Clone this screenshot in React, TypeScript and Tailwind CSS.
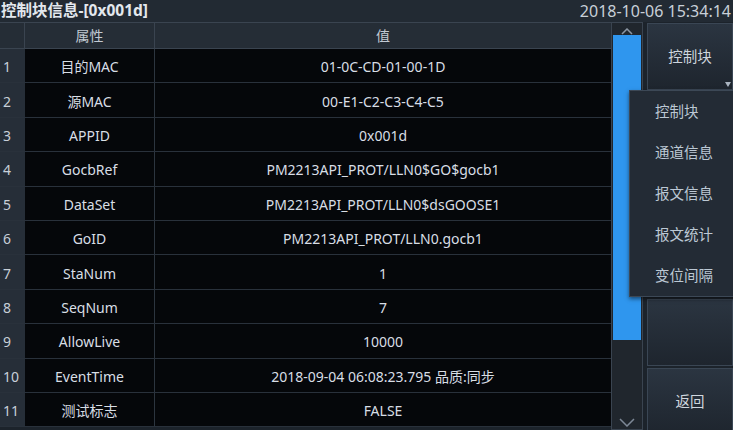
const rows: [string, string][] = [
  ['目的MAC', '01-0C-CD-01-00-1D'],
  ['源MAC', '00-E1-C2-C3-C4-C5'],
  ['APPID', '0x001d'],
  ['GocbRef', 'PM2213API_PROT/LLN0$GO$gocb1'],
  ['DataSet', 'PM2213API_PROT/LLN0$dsGOOSE1'],
  ['GoID', 'PM2213API_PROT/LLN0.gocb1'],
  ['StaNum', '1'],
  ['SeqNum', '7'],
  ['AllowLive', '10000'],
  ['EventTime', '2018-09-04 06:08:23.795 品质:同步'],
  ['测试标志', 'FALSE'],
];

const menu = ['控制块', '通道信息', '报文信息', '报文统计', '变位间隔'];

function SideButton({ label, arrow }: { label?: string; arrow?: boolean }) {
  return (
    <div className="relative flex h-[67px] shrink-0 items-center justify-center border border-[#3a4654] bg-gradient-to-b from-[#2b3541] to-[#1e252e] text-[14.5px] text-[#cfd6de]">
      {label}
      {arrow && (
        <span className="absolute right-[1px] bottom-[2px] h-0 w-0 border-t-[5px] border-r-[3px] border-l-[3px] border-t-[#aab4c0] border-r-transparent border-l-transparent" />
      )}
    </div>
  );
}

export default function App() {
  return (
    <div
      className="relative flex h-[430px] w-[733px] flex-col overflow-hidden bg-[#1c232b]"
      style={{ fontFamily: '"Noto Sans", "Noto Sans CJK SC", sans-serif' }}
    >
      <div className="flex h-[22px] shrink-0 items-center justify-between bg-[#222a33] pr-[2px] pl-[1px]">
        <span className="text-[15.5px] font-bold text-[#e3e8ee]">控制块信息-[0x001d]</span>
        <span className="text-[16px] text-[#c8d0d8]">2018-10-06 15:34:14</span>
      </div>

      <div className="flex min-h-0 flex-1">
        <div className="flex w-[611px] shrink-0 flex-col border-t border-[#3a4450] text-[14px] text-[#d8dee5]">
          <div className="flex h-[26px] shrink-0 border-b border-[#3a4450] bg-[#252d36] text-[#c2cad3]">
            <div className="w-[25px] shrink-0 border-r border-[#3a4450]" />
            <div className="flex w-[130px] shrink-0 items-center justify-center border-r border-[#3a4450]">属性</div>
            <div className="flex flex-1 items-center justify-center">值</div>
          </div>
          {rows.map(([k, v], i) => (
            <div key={i} className="flex h-[34.4px] shrink-0 border-b border-[#29313b]">
              <div className="flex w-[25px] shrink-0 items-center bg-[#262e38] pl-[3px] pt-[2px] text-[#c8d0d8]">{i + 1}</div>
              <div className="flex w-[130px] shrink-0 items-center justify-center border-r border-[#2c353f] bg-[#05070a] pt-[2px]">{k}</div>
              <div className="flex flex-1 items-center justify-center bg-[#05070a] pt-[2px]">{v}</div>
            </div>
          ))}
        </div>

        <div className="flex w-[32px] shrink-0 flex-col border border-[#3a4450] bg-[#20262d] px-[1px]">
          <div className="flex h-[12px] shrink-0 items-end justify-center">
            <svg width="12" height="7" viewBox="0 0 12 7">
              <path d="M1 6 L6 1 L11 6" fill="none" stroke="#8b96a3" strokeWidth="1.5" />
            </svg>
          </div>
          <div className="h-[305px] shrink-0 bg-[#2f96ee]" />
          <div className="flex flex-1 items-end justify-center pb-[2px]">
            <svg width="16" height="9" viewBox="0 0 16 9">
              <path d="M1 1 L8 8 L15 1" fill="none" stroke="#7d8896" strokeWidth="1.5" />
            </svg>
          </div>
        </div>

        <div className="ml-[4px] flex flex-1 flex-col gap-[2px] pt-[1px]">
          <SideButton label="控制块" arrow />
          <SideButton />
          <SideButton />
          <SideButton />
          <SideButton />
          <SideButton label="返回" />
        </div>
      </div>

      <div className="absolute top-[90px] left-[629px] flex h-[207px] w-[110px] flex-col border border-[#3c4856] bg-[#232b35] shadow-[0_2px_4px_rgba(0,0,0,0.5)]">
        {menu.map((m) => (
          <div key={m} className="flex h-[41.2px] items-center pl-[25px] text-[14.5px] text-[#bcc8d4]">
            {m}
          </div>
        ))}
      </div>
    </div>
  );
}
